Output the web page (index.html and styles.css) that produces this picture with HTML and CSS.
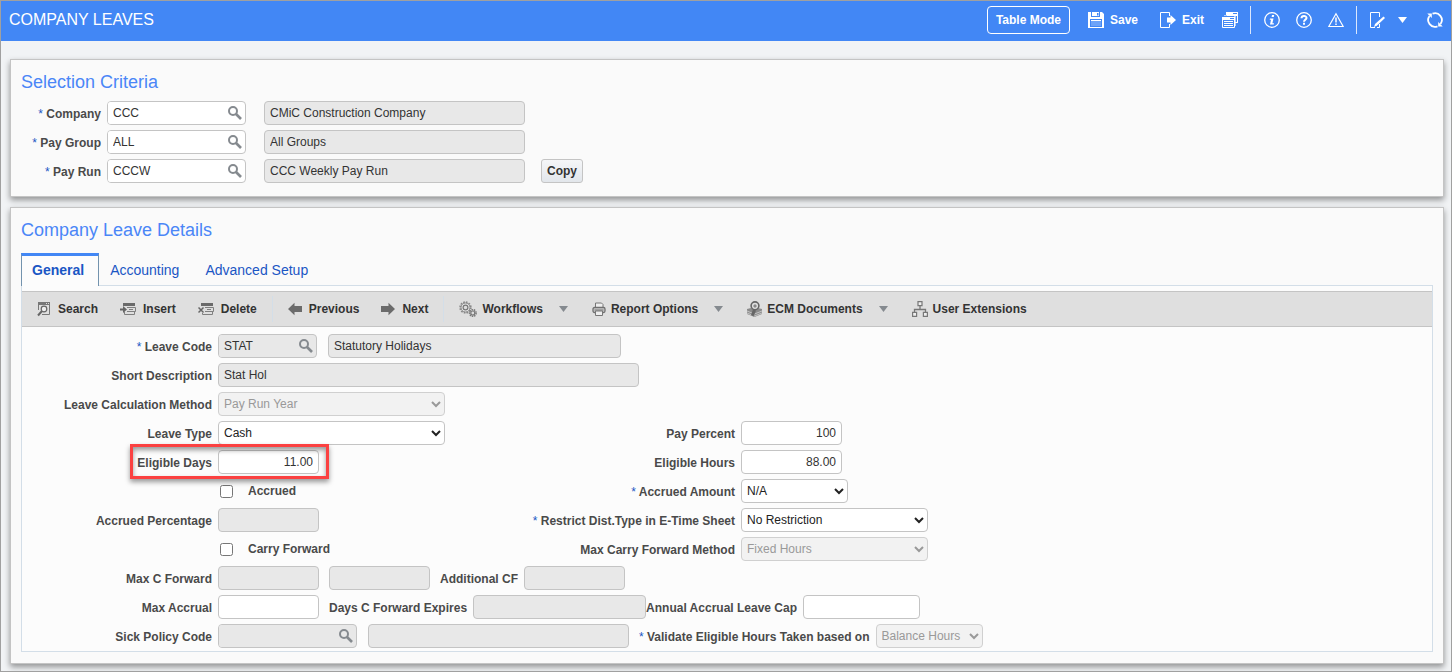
FILE: index.html
```html
<!DOCTYPE html>
<html lang="en">

<head>
    <meta charset="UTF-8">
    <meta name="viewport" content="width=device-width, initial-scale=1.0">
    <title>Company Leaves</title>
    <link rel="stylesheet" href="styles.css">
</head>

<body>

    <!-- Shared icon shapes -->
    <svg class="sprite" aria-hidden="true">
        <symbol id="icon-lens" viewBox="0 0 14 14">
            <circle cx="5" cy="5" r="4" fill="none" stroke="currentColor" stroke-width="2" />
            <path d="M8 8l5 5" stroke="currentColor" stroke-width="2.6" />
        </symbol>
        <symbol id="icon-down" viewBox="0 0 9 6">
            <path d="M0 0h9L4.500 6z" fill="currentColor" />
        </symbol>
    </svg>

    <!-- Title bar -->
    <header class="topbar">
        <h1>COMPANY LEAVES</h1>
        <button type="button" class="table-mode">Table Mode</button>
        <button type="button" class="top-btn save">
            <svg width="16" height="16" viewBox="0 0 16 16">
                <path d="M0 0h14l2 2v14H0z" fill="#fff" />
                <path d="M3 0h9v5H3z" fill="#4287f5" />
                <path d="M4 0h7v4H4z" fill="#fff" />
                <path d="M9 1h1.500v2.500H9z" fill="#4287f5" />
                <path d="M2 7h12v8H2z" fill="#4287f5" />
                <path d="M3 9h10v5H3z" fill="#6da3f8" />
                <path d="M3 8h10v1H3z" fill="#fff" />
            </svg>
            Save
        </button>
        <button type="button" class="top-btn exit">
            <svg width="16" height="16" viewBox="0 0 16 16">
                <path d="M9.500 4V.5h-9v15h9V12" fill="none" stroke="#fff" />
                <path d="M7 5.500h3.500V3L16 8l-5.500 5v-2.500H7z" fill="#fff" />
            </svg>
            Exit
        </button>
        <button type="button" class="top-btn windows" aria-label="Windows">
            <svg width="16" height="16" viewBox="0 0 16 16">
                <path d="M4 0h12v11h-3v-1h2V4H5V3H4z" fill="#fff" />
                <path d="M11 1.500h4" stroke="#4287f5" />
                <path d="M2 3h12v11h-2V4H2z" fill="#fff" opacity=".6" />
                <path d="M.5 5.500h12v10H.5z" fill="#4287f5" stroke="#fff" />
                <path d="M0 5h13v3H0zM2 9h9v1H2zM2 11h9v1H2zM2 13h9v1H2z" fill="#fff" />
                <path d="M8 6.500h4" stroke="#4287f5" />
            </svg>
        </button>
        <span class="top-line"></span>
        <button type="button" class="top-btn info" aria-label="Information">
            <svg width="16" height="16" viewBox="0 0 16 16">
                <circle cx="8" cy="8" r="7.300" fill="none" stroke="#fff" stroke-width="1.300" />
                <path d="M8 3h2.200l-.4 2H7.600zM6 6.500h3.500L8.400 11.300H10l-.3 1.200H6l1-4.800H5.700z" fill="#fff" />
            </svg>
        </button>
        <button type="button" class="top-btn help" aria-label="Help">
            <svg width="16" height="16" viewBox="0 0 16 16">
                <circle cx="8" cy="8" r="7.300" fill="none" stroke="#fff" stroke-width="1.300" />
                <path d="M5.500 6.300C5.500 3.300 10.500 3.300 10.500 6 10.500 7.600 8 7.600 8 9.700" fill="none" stroke="#fff" stroke-width="2" />
                <path d="M7 10.700h2v2H7z" fill="#fff" />
            </svg>
        </button>
        <button type="button" class="top-btn warning" aria-label="Warnings">
            <svg width="16" height="16" viewBox="0 0 16 16">
                <path d="M8 1.800L15.200 14.500H.8z" fill="none" stroke="#fff" stroke-width="1.200" />
                <path d="M8 5.500v5M8 11.500v1.500" stroke="#fff" stroke-width="1.500" />
            </svg>
        </button>
        <span class="top-line"></span>
        <button type="button" class="top-btn edit" aria-label="Edit">
            <svg width="17" height="16" viewBox="0 0 17 16">
                <path d="M10.500 5V.5h-9v15H6M10.500 12v3.500H8" fill="none" stroke="#fff" />
                <path d="M5 15l1-3 8.500-7.500 1.500 1.500-8 7.500z" fill="#fff" />
            </svg>
        </button>
        <button type="button" class="top-btn more" aria-label="More">
            <svg width="9" height="6"><use href="#icon-down" /></svg>
        </button>
        <button type="button" class="top-btn refresh" aria-label="Refresh">
            <svg width="16" height="16" viewBox="0 0 16 16">
                <path d="M5.500 1.700A6.800 6.800 0 0 1 13.500 12M10.500 14.300A6.800 6.800 0 0 1 2.500 4" fill="none" stroke="#fff" stroke-width="1.800" />
                <path d="M.3 1.500h4.500v4.500zM15.700 14.500h-4.500V10z" fill="#fff" />
            </svg>
        </button>
    </header>

    <main>

        <!-- Selection Criteria -->
        <section class="panel">
            <h2>Selection Criteria</h2>
            <div class="rows criteria">
                <div class="row">
                    <label class="label" for="company"><span class="star">*</span> Company</label>
                    <div class="lookup w139">
                        <input type="text" id="company" value="CCC">
                        <button type="button" aria-label="Find company"><svg width="14" height="14"><use href="#icon-lens" /></svg></button>
                    </div>
                    <input type="text" class="w261" value="CMiC Construction Company" aria-label="Company name" readonly>
                </div>
                <div class="row">
                    <label class="label" for="pay-group"><span class="star">*</span> Pay Group</label>
                    <div class="lookup w139">
                        <input type="text" id="pay-group" value="ALL">
                        <button type="button" aria-label="Find pay group"><svg width="14" height="14"><use href="#icon-lens" /></svg></button>
                    </div>
                    <input type="text" class="w261" value="All Groups" aria-label="Pay group name" readonly>
                </div>
                <div class="row">
                    <label class="label" for="pay-run"><span class="star">*</span> Pay Run</label>
                    <div class="lookup w139">
                        <input type="text" id="pay-run" value="CCCW">
                        <button type="button" aria-label="Find pay run"><svg width="14" height="14"><use href="#icon-lens" /></svg></button>
                    </div>
                    <input type="text" class="w261" value="CCC Weekly Pay Run" aria-label="Pay run name" readonly>
                    <button type="button" class="copy">Copy</button>
                </div>
            </div>
        </section>

        <!-- Company Leave Details -->
        <section class="panel">
            <h2>Company Leave Details</h2>
            <nav class="tabs">
                <a href="#general" class="active">General</a>
                <a href="#accounting">Accounting</a>
                <a href="#advanced">Advanced Setup</a>
            </nav>

            <div class="tab-body" id="general">
                <div class="toolbar">
                    <div class="tools">
                        <button type="button">
                            <svg width="16" height="16" viewBox="0 0 16 16">
                                <path d="M3.500 9V1.500h11v12H7" fill="none" stroke="#777" />
                                <path d="M3 1h12v3H3z" fill="#777" />
                                <path d="M11 2.500h1M13 2.500h1" stroke="#ddd" />
                                <circle cx="9" cy="8" r="2.800" fill="#eee" stroke="#666" stroke-width="1.200" />
                                <path d="M7 10l-4 4.500" stroke="#666" stroke-width="2" />
                            </svg>
                            Search
                        </button>
                        <button type="button">
                            <svg width="16" height="16" viewBox="0 0 16 16">
                                <path d="M3 2h12v3H3z" fill="#6b6b6b" />
                                <path d="M7 6.500h8.500v4H7M9 8.500h4M4.500 10.500v3h10v-3" fill="none" stroke="#808080" />
                                <path d="M0 7.500h3V5l4 3.500L3 12V9.500H0z" fill="#666" />
                            </svg>
                            Insert
                        </button>
                        <button type="button">
                            <svg width="16" height="16" viewBox="0 0 16 16">
                                <path d="M3 2h12v3H3z" fill="#6b6b6b" />
                                <path d="M7 6.500h8.500v4H7M9 8.500h4M4.500 12v1.500h10v-3" fill="none" stroke="#808080" />
                                <path d="M.5 6.500l5 5M5.500 6.500l-5 5" stroke="#666" stroke-width="1.500" />
                            </svg>
                            Delete
                        </button>
                    </div>
                    <span class="tool-line"></span>
                    <div class="tools">
                        <button type="button">
                            <svg width="14" height="14" viewBox="0 0 14 14">
                                <path d="M0 7l6.500-6.200V4H14v6H6.500v3.200z" fill="#6b6b6b" />
                            </svg>
                            Previous
                        </button>
                        <button type="button">
                            <svg width="14" height="14" viewBox="0 0 14 14">
                                <path d="M14 7L7.500.8V4H0v6h7.500v3.200z" fill="#6b6b6b" />
                            </svg>
                            Next
                        </button>
                    </div>
                    <span class="tool-line"></span>
                    <div class="tools menus">
                        <button type="button">
                            <svg width="18" height="16" viewBox="0 0 18 16">
                                <circle cx="6.500" cy="6.500" r="5.400" fill="none" stroke="#888" stroke-width="1.600" stroke-dasharray="1.700 1.100" />
                                <circle cx="6.500" cy="6.500" r="4.500" fill="#e6e6e6" stroke="#888" />
                                <circle cx="6.500" cy="6.500" r="2.400" fill="#ddd" stroke="#777" stroke-width="1.200" />
                                <circle cx="13.800" cy="12" r="3.300" fill="#ddd" stroke="#777" stroke-width="1.500" stroke-dasharray="1.500 .8" />
                                <circle cx="13.800" cy="12" r="2" fill="#ddd" stroke="#777" stroke-width="1.200" />
                            </svg>
                            Workflows
                            <svg class="caret" width="9" height="6"><use href="#icon-down" /></svg>
                        </button>
                        <button type="button">
                            <svg width="14" height="14" viewBox="0 0 14 14">
                                <path d="M3.500 5V1h6l1.500 1.500V5" fill="#eee" stroke="#777" />
                                <rect x="1" y="5.500" width="12" height="5" rx="1.500" fill="#ccc" stroke="#707070" stroke-width="1.300" />
                                <path d="M3.500 9h7v4.500h-7z" fill="#eee" stroke="#777" />
                                <path d="M2.500 8h9" stroke="#777" />
                            </svg>
                            Report Options
                            <svg class="caret" width="9" height="6"><use href="#icon-down" /></svg>
                        </button>
                        <button type="button">
                            <svg width="15" height="16" viewBox="0 0 15 16">
                                <path d="M0 8l4-1 3.500 2L11 7l4 1v5l-7.500 3L0 13z" fill="#8b8b8b" />
                                <path d="M0 10l7.500 3 7.500-3M0 12l7.500 3 7.500-3" fill="none" stroke="#ddd" stroke-width=".7" />
                                <circle cx="8" cy="4.800" r="3.900" fill="#ddd" stroke="#666" stroke-width="1.600" />
                                <path d="M8 3l2 2-2 2-2-2z" fill="#888" />
                                <path d="M6 8.500L4 14l2.500 1.500 2.500-6z" fill="#666" />
                            </svg>
                            ECM Documents
                            <svg class="caret" width="9" height="6"><use href="#icon-down" /></svg>
                        </button>
                        <button type="button">
                            <svg width="16" height="16" viewBox="0 0 16 16">
                                <path d="M8 5v4M2.500 11V8.500h11V11" fill="none" stroke="#777" stroke-width="1.300" />
                                <path d="M6 .6h4v4H6zM.6 11.400h4v4h-4zM11.400 11.400h4v4h-4z" fill="#eee" stroke="#777" stroke-width="1.200" />
                            </svg>
                            User Extensions
                        </button>
                    </div>
                </div>

                <div class="rows details">
                    <div class="row">
                        <label class="label" for="leave-code"><span class="star">*</span> Leave Code</label>
                        <div class="lookup readonly w99">
                            <input type="text" id="leave-code" value="STAT" readonly>
                            <button type="button" aria-label="Find leave code"><svg width="14" height="14"><use href="#icon-lens" /></svg></button>
                        </div>
                        <input type="text" class="after-lookup w293" value="Statutory Holidays" aria-label="Leave description" readonly>
                    </div>
                    <div class="row">
                        <label class="label" for="short-desc">Short Description</label>
                        <input type="text" id="short-desc" class="w421" value="Stat Hol" readonly>
                    </div>
                    <div class="row">
                        <label class="label" for="calc-method">Leave Calculation Method</label>
                        <select id="calc-method" class="w227" disabled>
                            <option>Pay Run Year</option>
                        </select>
                    </div>
                    <div class="row">
                        <div class="left">
                            <label class="label" for="leave-type">Leave Type</label>
                            <select id="leave-type" class="w227">
                                <option>Cash</option>
                            </select>
                        </div>
                        <label class="label second" for="pay-percent">Pay Percent</label>
                        <input type="text" id="pay-percent" class="number w101" value="100">
                    </div>
                    <div class="row">
                        <div class="left highlighted">
                            <label class="label" for="eligible-days">Eligible Days</label>
                            <input type="text" id="eligible-days" class="number w101" value="11.00">
                            <span class="highlight"></span>
                        </div>
                        <label class="label second" for="eligible-hours">Eligible Hours</label>
                        <input type="text" id="eligible-hours" class="number w101" value="88.00">
                    </div>
                    <div class="row">
                        <div class="left check">
                            <input type="checkbox" id="accrued">
                            <label for="accrued">Accrued</label>
                        </div>
                        <label class="label second" for="accrued-amount"><span class="star">*</span> Accrued Amount</label>
                        <select id="accrued-amount" class="w107">
                            <option>N/A</option>
                        </select>
                    </div>
                    <div class="row">
                        <div class="left">
                            <label class="label" for="accrued-pct">Accrued Percentage</label>
                            <input type="text" id="accrued-pct" class="number w101" readonly>
                        </div>
                        <label class="label second" for="restrict-type"><span class="star">*</span> Restrict Dist.Type in E-Time Sheet</label>
                        <select id="restrict-type" class="w187">
                            <option>No Restriction</option>
                        </select>
                    </div>
                    <div class="row">
                        <div class="left check">
                            <input type="checkbox" id="carry-forward">
                            <label for="carry-forward">Carry Forward</label>
                        </div>
                        <label class="label second" for="carry-method">Max Carry Forward Method</label>
                        <select id="carry-method" class="w187" disabled>
                            <option>Fixed Hours</option>
                        </select>
                    </div>
                    <div class="row">
                        <label class="label" for="max-cf">Max C Forward</label>
                        <input type="text" id="max-cf" class="number w101" readonly>
                        <input type="text" class="spaced w101" aria-label="Max C Forward unit" readonly>
                        <label class="label inline spaced" for="additional-cf">Additional CF</label>
                        <input type="text" id="additional-cf" class="number w101" readonly>
                    </div>
                    <div class="row">
                        <label class="label" for="max-accrual">Max Accrual</label>
                        <input type="text" id="max-accrual" class="number w101">
                        <label class="label inline spaced" for="days-expires">Days C Forward Expires</label>
                        <input type="text" id="days-expires" class="w173" readonly>
                        <label class="label inline" for="leave-cap">Annual Accrual Leave Cap</label>
                        <input type="text" id="leave-cap" class="number w117">
                    </div>
                    <div class="row">
                        <label class="label" for="sick-code">Sick Policy Code</label>
                        <div class="lookup readonly w139">
                            <input type="text" id="sick-code" readonly>
                            <button type="button" aria-label="Find sick policy"><svg width="14" height="14"><use href="#icon-lens" /></svg></button>
                        </div>
                        <input type="text" class="after-lookup w261" aria-label="Sick policy name" readonly>
                        <label class="label inline spaced" for="validate-hours"><span class="star">*</span> Validate Eligible Hours Taken based on</label>
                        <select id="validate-hours" class="w107" disabled>
                            <option>Balance Hours</option>
                        </select>
                    </div>
                </div>
            </div>
        </section>

    </main>

</body>

</html>
```

FILE: styles.css
```css
* {
    margin: 0;
    padding: 0;
    box-sizing: border-box;
}

body {
    min-height: 100vh;
    border: 1px solid #a0a0a0;
    background-color: #f1f3f5;
    color: #333;
    font-family: "Liberation Sans", Arial, sans-serif;
    font-size: 12px;
}

button,
input,
select {
    font-family: inherit;
    font-size: 12px;
    color: #333;
}

button {
    border: none;
    background: none;
    font-weight: bold;
    cursor: pointer;
}

svg {
    display: block;
    flex-shrink: 0;
}

.sprite {
    position: absolute;
    width: 0;
    height: 0;
}

/* Title bar */
.topbar {
    display: flex;
    align-items: center;
    height: 40px;
    padding: 0 8px 2px;
    background-color: #4287f5;
}

.topbar h1 {
    flex: 1;
    color: white;
    font-size: 16px;
    font-weight: normal;
    line-height: 20px;
}

.topbar button {
    color: white;
}

.topbar .table-mode {
    width: 83px;
    height: 28px;
    border: 1px solid white;
    border-radius: 4px;
}

.top-btn {
    display: flex;
    align-items: center;
    gap: 6px;
}

.save,
.windows {
    margin-left: 18px;
}

.exit {
    margin-left: 22px;
}

.help,
.warning {
    margin-left: 16px;
}

.info {
    margin-left: 13px;
}

.edit,
.more {
    margin-left: 12px;
}

.refresh {
    margin-left: 20px;
}

.top-line {
    width: 1px;
    height: 28px;
    margin-left: 12px;
    background-color: #dbe7fd;
}

/* Panels */
main {
    display: flex;
    flex-direction: column;
    gap: 10px;
    padding: 18px 7px 7px 9px;
}

.panel {
    padding: 11px 10px;
    border: 1px solid #c4c4c4;
    background-color: #fafafa;
    box-shadow: 0 3px 6px rgba(0, 0, 0, 0.4);
}

.panel h2 {
    margin-bottom: 8px;
    color: #4a86f7;
    font-size: 18px;
    font-weight: normal;
    line-height: 22px;
}

/* Form rows */
.rows {
    display: flex;
    flex-direction: column;
    gap: 5px;
}

.row,
.left {
    display: flex;
    align-items: center;
    height: 24px;
}

label {
    color: #4a4a4a;
    font-weight: bold;
    white-space: nowrap;
}

.label {
    flex-shrink: 0;
    margin-right: 6px;
    padding-top: 2px;
    text-align: right;
}

.star {
    color: #1a56c4;
    font-weight: normal;
}

.criteria {
    padding-bottom: 2px;
}

.criteria .label {
    width: 80px;
}

.criteria .lookup {
    margin-right: 18px;
}

.details {
    padding: 7px 0 3px;
}

.details .label {
    width: 190px;
}

.details .left {
    width: 423px;
}

.details .second {
    width: 290px;
}

.details .inline {
    width: auto;
}

.spaced {
    margin-left: 10px;
}

.after-lookup {
    margin-left: 11px;
}

input[type="text"],
select,
.lookup {
    height: 24px;
    border: 1px solid #c4c4c4;
    border-radius: 4px;
    background-color: white;
}

input[type="text"] {
    padding: 0 5px 1px;
}

input[type="text"]:read-only,
.lookup.readonly {
    background-color: #e8e8e8;
}

input.number {
    text-align: right;
}

select {
    padding: 0 0 1px 1px;
    color: #222;
}

select:disabled {
    border-color: #d0d0d0;
    background-color: #f2f2f2;
    color: #999;
    opacity: 1;
}

/* Text box with a search button inside */
.lookup {
    display: flex;
    align-items: center;
    padding-right: 3px;
    overflow: hidden;
}

.lookup input[type="text"] {
    flex: 1;
    min-width: 0;
    height: 22px;
    border: none;
    border-radius: 0;
}

.lookup button {
    color: #858a8f;
}

.copy {
    width: 42px;
    height: 24px;
    margin-left: 16px;
    border: 1px solid #c4c4c4;
    border-radius: 3px;
    background: linear-gradient(#f5f6f8, #e2e6eb);
}

.check {
    padding-left: 198px;
}

.check input {
    width: 13px;
    height: 13px;
    margin-right: 15px;
}

/* Field widths */
.w99 { width: 99px; }
.w101 { width: 101px; }
.w107 { width: 107px; }
.w117 { width: 117px; }
.w139 { width: 139px; }
.w173 { width: 173px; }
.w187 { width: 187px; }
.w227 { width: 227px; }
.w261 { width: 261px; }
.w293 { width: 293px; }
.w421 { width: 421px; }

/* Red box around Eligible Days */
.highlighted {
    position: relative;
}

.highlight {
    position: absolute;
    left: 108px;
    top: -6px;
    width: 199px;
    height: 35px;
    border: 3px solid #fb4141;
    box-shadow: 0 3px 5px rgba(0, 0, 0, 0.4), inset 0 3px 5px rgba(0, 0, 0, 0.4);
    pointer-events: none;
}

/* Tabs */
.tabs {
    display: flex;
    position: relative;
    height: 33px;
    margin-top: 12px;
    margin-bottom: -1px;
}

.tabs a {
    padding: 0 14px 0 10px;
    border: 1px solid transparent;
    border-top-width: 3px;
    border-bottom: none;
    color: #1a56c4;
    font-size: 14px;
    line-height: 29px;
    text-decoration: none;
}

.tabs .active {
    border-color: #4287f5 #7393ae;
    background-color: #fcfcfc;
    font-weight: bold;
}

.tab-body {
    padding-top: 5px;
    border: 1px solid #d3dee8;
    background-color: #fcfcfc;
}

/* Toolbar */
.toolbar {
    display: flex;
    align-items: center;
    height: 36px;
    padding-left: 13px;
    border-top: 1px solid #c4c4c4;
    border-bottom: 1px solid #c4c4c4;
    background-color: #dfdfdf;
}

.tools {
    display: flex;
    gap: 22px;
}

.tools button {
    display: flex;
    align-items: center;
    gap: 7px;
    white-space: nowrap;
}

.tool-line {
    width: 1px;
    height: 26px;
    margin: 0 15px;
    background-color: #d3dee8;
}

.menus {
    gap: 24px;
}

.menus button {
    gap: 5px;
}

.caret {
    margin-left: 11px;
    color: #858a8f;
}
```
